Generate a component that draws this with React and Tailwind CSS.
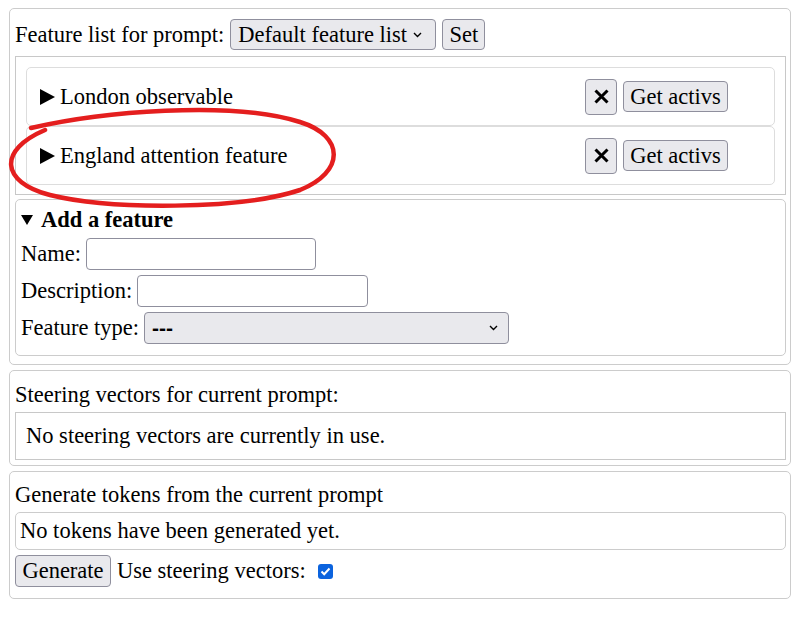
import React from "react";

const Chevron = () => (
  <svg width="9" height="6" viewBox="0 0 9 6" className="shrink-0">
    <path d="M1 1 L4.5 4.5 L8 1" fill="none" stroke="#000" strokeWidth="1.4" />
  </svg>
);

const XIcon = () => (
  <svg width="17" height="15" viewBox="0 0 17 15">
    <path d="M2.5 1.5 L14.5 13.5 M14.5 1.5 L2.5 13.5" stroke="#000" strokeWidth="3" fill="none" />
  </svg>
);

const RightTri = () => (
  <svg width="15" height="16" viewBox="0 0 15 16" className="shrink-0">
    <polygon points="0,0 15,8 0,16" fill="#000" />
  </svg>
);

const DownTri = () => (
  <svg width="12" height="10" viewBox="0 0 12 10" className="shrink-0">
    <polygon points="0,0 12,0 6,10" fill="#000" />
  </svg>
);

const base =
  "flex items-center bg-[#e9e9ed] border border-[#8f8f9d] rounded-[4px] text-black leading-[26px] whitespace-nowrap";
const btn = base + " justify-center px-[4px]";

function FeatureCard({ name }) {
  return (
    <div className="h-[59px] w-[749px] border border-[#dddddd] rounded-[5px] flex items-center pl-[13px] pr-[46px]">
      <div className="flex items-center gap-[5px] flex-1">
        <RightTri />
        <span>{name}</span>
      </div>
      <div className="flex items-center gap-[6px]">
        <div className={base + " justify-center w-[32px] h-[36px]"}>
          <XIcon />
        </div>
        <div className={btn + " w-[105px] h-[31px]"}>Get activs</div>
      </div>
    </div>
  );
}

export default function App() {
  return (
    <div className="relative w-[805px] h-[628px] bg-white [font-family:'Liberation_Serif','Times_New_Roman',serif] text-[22.5px] leading-[26px] text-black pt-[8px] pl-[9px]">
      {/* Panel 1 */}
      <div className="w-[782px] border border-[#cccccc] rounded-[5px] pt-[10px] pl-[5px] pb-[8px]">
        <div className="h-[31px] flex items-center">
          <span className="whitespace-nowrap">Feature list for prompt:</span>
          <div className={base + " ml-[6px] w-[206px] h-[31px] justify-between pl-[7px] pr-[13px]"}>
            <span>Default feature list</span>
            <Chevron />
          </div>
          <div className={btn + " ml-[6px] w-[43px] h-[31px]"}>Set</div>
        </div>

        <div className="mt-[6px] w-[771px] border border-[#c8c8c8] pt-[10px] pl-[10px] pb-[9px]">
          <FeatureCard name="London observable" />
          <FeatureCard name="England attention feature" />
        </div>

        <div className="mt-[4px] w-[771px] border border-[#cccccc] rounded-[5px] pl-[5px] pt-[7px] pb-[11px]">
          <div className="flex items-center gap-[8px] font-bold">
            <DownTri />
            <span>Add a feature</span>
          </div>
          <div className="mt-[5px] flex flex-col gap-[5px]">
            <div className="h-[32px] flex items-center gap-[5px]">
              <span>Name:</span>
              <div className="w-[230px] h-[32px] border border-[#8f8f9d] rounded-[4px] bg-white" />
            </div>
            <div className="h-[32px] flex items-center gap-[5px]">
              <span>Description:</span>
              <div className="w-[231px] h-[32px] border border-[#8f8f9d] rounded-[4px] bg-white" />
            </div>
            <div className="h-[32px] flex items-center gap-[5px]">
              <span>Feature type:</span>
              <div className={base + " w-[365px] h-[32px] justify-between pl-[7px] pr-[10px]"}>
                <span className="[font-family:'Liberation_Sans',Arial,sans-serif] text-[21px] font-bold">---</span>
                <Chevron />
              </div>
            </div>
          </div>
        </div>
      </div>

      {/* Panel 2 */}
      <div className="mt-[5px] w-[782px] border border-[#cccccc] rounded-[5px] pt-[11px] pl-[5px] pb-[5px]">
        <div>Steering vectors for current prompt:</div>
        <div className="mt-[4px] w-[771px] h-[48px] border border-[#c8c8c8] flex items-center pl-[10px]">
          No steering vectors are currently in use.
        </div>
      </div>

      {/* Panel 3 */}
      <div className="mt-[5px] w-[782px] border border-[#cccccc] rounded-[5px] pt-[10px] pl-[5px] pb-[11px]">
        <div>Generate tokens from the current prompt</div>
        <div className="mt-[4px] w-[771px] h-[38px] border border-[#cccccc] rounded-[5px] flex items-center pl-[4px]">
          No tokens have been generated yet.
        </div>
        <div className="mt-[5px] h-[32px] flex items-center">
          <div className={btn + " w-[96px] h-[32px]"}>Generate</div>
          <span className="ml-[6px]">Use steering vectors:</span>
          <div className="ml-[12px] w-[15px] h-[15px] rounded-[3px] bg-[#0b63de] flex items-center justify-center">
            <svg width="11" height="9" viewBox="0 0 11 9">
              <path d="M1.5 4.5 L4.2 7.2 L9.5 1.5" fill="none" stroke="#fff" strokeWidth="2" />
            </svg>
          </div>
        </div>
      </div>

      {/* Hand-drawn red annotation */}
      <svg className="absolute left-0 top-0 pointer-events-none" width="805" height="628" viewBox="0 0 805 628">
        <path
          d="M31 128 C 100 112, 230 100, 300 122 C 345 136, 345 172, 300 190 C 240 210, 110 210, 50 195 C 0 182, -2 150, 45 130"
          fill="none"
          stroke="#e41e1e"
          strokeWidth="4.5"
          strokeLinecap="round"
        />
      </svg>
    </div>
  );
}
